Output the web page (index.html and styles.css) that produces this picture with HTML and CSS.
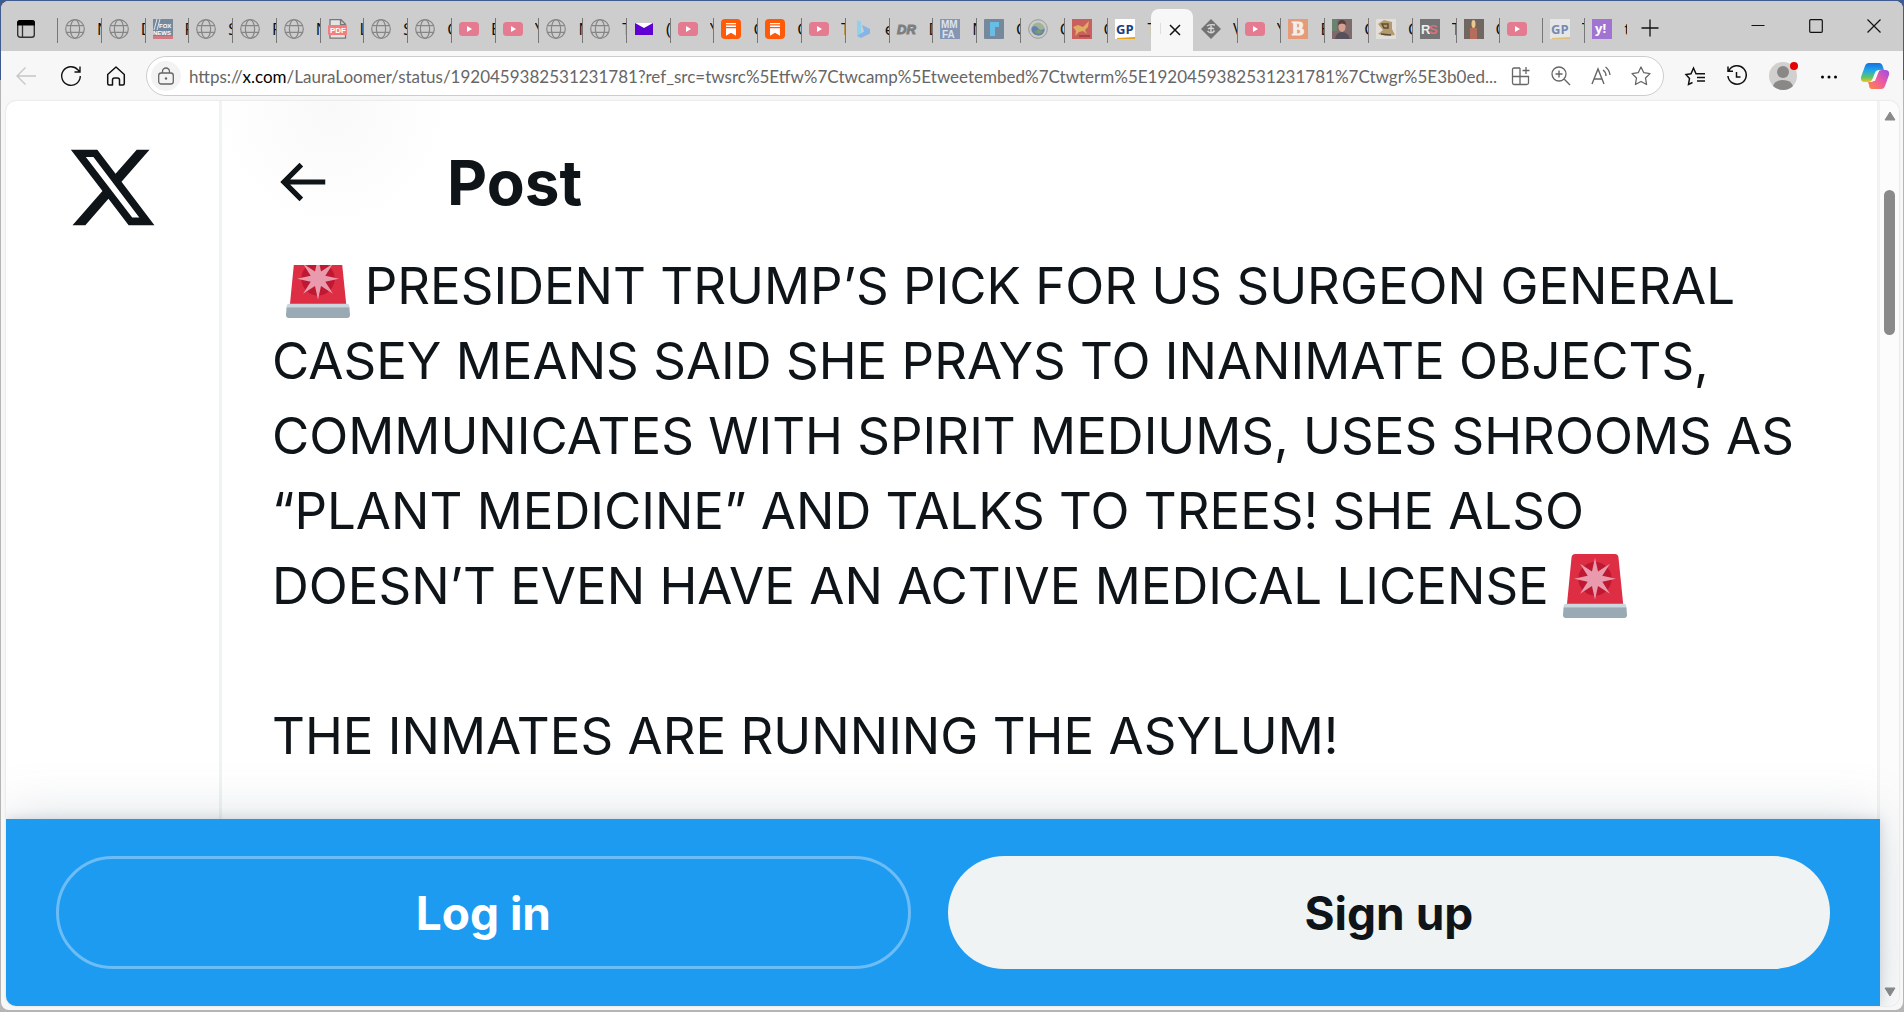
FILE: index.html
```
<!DOCTYPE html>
<html lang="en">
<head>
	<meta charset="utf-8">
	<title>Post / X</title>
	<link rel="stylesheet" href="styles.css">
</head>
<body>
	<!-- shared icons -->
	<svg class="sprite" aria-hidden="true">
		<symbol id="globe" viewBox="0 0 20 20">
			<g fill="none" stroke="#868686" stroke-width="1.2">
				<circle cx="10" cy="10" r="9.3"/>
				<ellipse cx="10" cy="10" rx="4.6" ry="9.3"/>
				<path d="M1.6 6.6h16.8M1.6 13.4h16.8"/>
			</g>
		</symbol>
		<symbol id="youtube" viewBox="0 0 20 20">
			<rect y="3" width="20" height="14" rx="3.5" fill="#e57b91"/>
			<path d="M8 7l5 3-5 3z" fill="#fff"/>
		</symbol>
		<symbol id="substack" viewBox="0 0 20 20">
			<rect width="20" height="20" rx="4" fill="#ff5a08"/>
			<path d="M5 4h10v1.3H5zM5 6.6h10v1.3H5zM5 9.2h10v7.6l-5-3-5 3z" fill="#fff"/>
		</symbol>
		<symbol id="siren" viewBox="0 0 36 36">
			<path d="M2.2 28.5L4.8 2C4.9.8 5.6 0 6.8 0h22.4c1.200 0 1.900.8 2 2l2.700 26.500z" fill="#dd2e44"/>
			<circle cx="18" cy="13.900" r="9.400" fill="#be1931"/>
			<path d="M18 2.100L19.700 9.800 26.400 5.500 22.100 12.200 29.800 13.900 22.100 15.600 26.400 22.300 19.700 18 18 25.700 16.300 18 9.600 22.300 13.900 15.600 6.200 13.900 13.900 12.200 9.600 5.500 16.300 9.800z" fill="#ea9aad"/>
			<path d="M.3 30l.2-1c.1-.6.5-1 1.100-1h32.800c.6 0 1 .4 1.100 1l.2 1z" fill="#ccd6dd"/>
			<path d="M.3 29.900h35.400l.3 4.600c0 .9-.6 1.500-1.500 1.500h-33C.6 36 0 35.400 0 34.500z" fill="#99aab5"/>
		</symbol>
	</svg>

	<div class="window">
		<div class="tab-strip">
			<button class="tab-actions" aria-label="Tab actions">
				<svg viewBox="0 0 18 18"><rect x=".7" y=".7" width="16.600" height="16.600" rx="2.500" fill="none" stroke="#333" stroke-width="1.400"/><path d="M0 5.500V3a3 3 0 013-3h12a3 3 0 013 3v2.500z"/><path d="M5.500 5v12" stroke="#333" stroke-width="1.300"/></svg>
			</button>
			<div class="tabs">
				<button class="tab"><svg><use href="#globe"/></svg><span>N</span></button>
				<button class="tab"><svg><use href="#globe"/></svg><span>D</span></button>
				<button class="tab"><svg viewBox="0 0 20 20"><rect width="20" height="20" fill="#74899f"/><path d="M0 17h20v3H0z" fill="#d27a84"/><path d="M1 11L4 0M4 11L7 0" stroke="#dfe5ea"/><text x="6" y="8.500" class="fav-sm" fill="#fff">FOX</text><text x="0" y="15.500" class="fav-sm" fill="#fff">NEWS</text></svg><span>F</span></button>
				<button class="tab"><svg><use href="#globe"/></svg><span>S</span></button>
				<button class="tab"><svg><use href="#globe"/></svg><span>R</span></button>
				<button class="tab"><svg><use href="#globe"/></svg><span>N</span></button>
				<button class="tab"><svg viewBox="0 0 20 20"><path d="M2 .7h11l4.500 4.500v14H2zM12.500.7v5h5" fill="#e4e4e4" stroke="#777" stroke-width="1.300"/><rect y="6" width="19" height="10" rx="1" fill="#f08080"/><text x="2" y="14" class="fav-pdf" fill="#fff">PDF</text></svg><span>L</span></button>
				<button class="tab"><svg><use href="#globe"/></svg><span>S</span></button>
				<button class="tab"><svg><use href="#globe"/></svg><span>C</span></button>
				<button class="tab"><svg><use href="#youtube"/></svg><span>E</span></button>
				<button class="tab"><svg><use href="#youtube"/></svg><span>Y</span></button>
				<button class="tab"><svg><use href="#globe"/></svg><span>N</span></button>
				<button class="tab"><svg><use href="#globe"/></svg><span>T</span></button>
				<button class="tab"><svg viewBox="0 0 20 20"><path d="M1 4h18v12H1z" fill="#5f01d1"/><path d="M1 4h18l-9 5z" fill="#fff"/></svg><span>(</span></button>
				<button class="tab"><svg><use href="#youtube"/></svg><span>Y</span></button>
				<button class="tab"><svg><use href="#substack"/></svg><span>C</span></button>
				<button class="tab"><svg><use href="#substack"/></svg><span>C</span></button>
				<button class="tab"><svg><use href="#youtube"/></svg><span>T</span></button>
				<button class="tab"><svg viewBox="0 0 20 20"><path d="M4 1l4 1.500v12L4 17z" fill="#8fd0ec"/><path d="M9 6l8 4v4.500L8 19l-4-2 7-4.500z" fill="#86b4e4"/></svg><span>e</span></button>
				<button class="tab"><svg viewBox="0 0 20 20"><text x="0" y="15" class="fav-dr" fill="#7e7e7e" stroke="#7e7e7e">DR</text></svg><span>D</span></button>
				<button class="tab"><svg viewBox="0 0 20 20"><rect width="20" height="20" fill="#8596b3"/><text x="1" y="9" class="fav-mm" fill="#dde3ec">MM</text><text x="2" y="18.500" class="fav-mm" fill="#dde3ec">FA</text></svg><span>N</span></button>
				<button class="tab"><svg viewBox="0 0 20 20"><rect width="20" height="20" rx="1" fill="#75889c"/><path d="M6 17V3h9v5h-4v9z" fill="#66bde6"/></svg><span>C</span></button>
				<button class="tab"><svg viewBox="0 0 20 20"><circle cx="10" cy="10" r="9.300" fill="#c9cdc6" stroke="#999"/><circle cx="10" cy="10" r="6.500" fill="#9fb29a"/><path d="M3.500 9q3-4 6.500 0t6.500 0v3q-2 5-6.500 4.500T3.500 12z" fill="#6681ad"/><path d="M6 13l5-3 4 3-4 2z" fill="#7c9c6c"/></svg><span>C</span></button>
				<button class="tab"><svg viewBox="0 0 20 20"><rect width="20" height="20" fill="#c9605e"/><path d="M1 8l5-2 5 2 6-6-1 6-3 3 2 4-4-3-4 1-4 4 1-5z" fill="#dfad63"/><path d="M7 17h11" stroke="#a64444" stroke-width="2"/></svg><span>C</span></button>
				<button class="tab"><svg viewBox="0 0 20 20"><rect width="20" height="20" fill="#fff"/><text x="1" y="14.500" class="fav-gp" fill="#1b3d7f">GP</text><path d="M2 19l18-1v2H2z" fill="#e5a21c"/></svg><span>T</span></button>
				<div class="tab tab-active">
					<button aria-label="Close tab"><svg viewBox="0 0 12 12"><path d="M1 1l10 10M11 1L1 11" stroke="#111" stroke-width="1.500"/></svg></button>
				</div>
				<button class="tab"><svg viewBox="0 0 20 20"><path d="M10 0l10 10-10 10L0 10z" fill="#737373"/><path d="M6 7q3-2 8-1M7 10q3-2 6 0M10 6v8M6.500 12q4 4 7-.5" fill="none" stroke="#d5d5d5" stroke-width="1.400"/></svg><span>V</span></button>
				<button class="tab"><svg><use href="#youtube"/></svg><span>Y</span></button>
				<button class="tab"><svg viewBox="0 0 20 20"><rect width="20" height="20" fill="#e69b78"/><text x="4" y="16" class="fav-b" fill="#f3eeea" stroke="#f3eeea">B</text></svg><span>E</span></button>
				<button class="tab"><svg viewBox="0 0 20 20"><rect width="20" height="20" fill="#7d6b6b"/><path d="M0 0h5v12H0z" fill="#6c8170"/><path d="M3 20q1-7 7-7t8 7z" fill="#55505c"/><ellipse cx="10" cy="8" rx="3.500" ry="5" fill="#d5a08e"/><path d="M6 6q0-5 4-5t4 5q-4-3-8 0z" fill="#54413f"/></svg><span>C</span></button>
				<button class="tab"><svg viewBox="0 0 20 20"><rect width="20" height="20" fill="#e2dfda"/><path d="M2 5l6-4 8 2v7l3 6-9 1-8-2 5-4z" fill="#b79a6c"/><path d="M6 5h6v4H8zM5 15l10 1" stroke="#594d3d" stroke-width="1.500" fill="none"/></svg><span>C</span></button>
				<button class="tab"><svg viewBox="0 0 20 20"><rect width="20" height="20" fill="#747474"/><text x="1" y="15" class="fav-rs" fill="#eee">R</text><text x="9" y="15" class="fav-rs" fill="#df6f7c">S</text></svg><span>T</span></button>
				<button class="tab"><svg viewBox="0 0 20 20"><rect width="20" height="20" fill="#706760"/><path d="M6 9h7v11H6z" fill="#b56d5e"/><ellipse cx="9.500" cy="5" rx="2" ry="4" fill="#ecc88c"/></svg><span>C</span></button>
				<button class="tab tab-short"><svg><use href="#youtube"/></svg><span></span></button>
				<button class="tab tab-short"><svg viewBox="0 0 20 20"><rect width="20" height="20" fill="#e6e6e6"/><text x="1" y="14.500" class="fav-gp" fill="#748bb3">GP</text><path d="M2 19l18-1v2H2z" fill="#dfc07c"/></svg><span>T</span></button>
				<button class="tab tab-short"><svg viewBox="0 0 20 20"><rect width="20" height="20" fill="#a274d1"/><text x="3" y="14" class="fav-gp" fill="#fff">y!</text></svg><span>t</span></button>
			</div>
			<button class="new-tab" aria-label="New tab"><svg viewBox="0 0 18 18"><path d="M9 .5v17M.5 9h17" stroke="#111" stroke-width="1.300"/></svg></button>
			<div class="window-controls">
				<button aria-label="Minimize"><svg viewBox="0 0 14 14"><path d="M.5 6.500h13" stroke="#111"/></svg></button>
				<button aria-label="Maximize"><svg viewBox="0 0 14 14"><rect x=".7" y=".7" width="12.600" height="12.600" rx="1" fill="none" stroke="#111" stroke-width="1.200"/></svg></button>
				<button aria-label="Close"><svg viewBox="0 0 14 14"><path d="M.5.5l13 13M13.500.5l-13 13" stroke="#111" stroke-width="1.200"/></svg></button>
			</div>
		</div>

		<div class="toolbar">
			<div class="nav">
				<button aria-label="Back" disabled><svg viewBox="0 0 20 20"><path d="M20 10H1M9.500 1.500L1 10l8.500 8.500" fill="none" stroke="#c6c6c6" stroke-width="1.300"/></svg></button>
				<button aria-label="Refresh"><svg viewBox="0 0 20 20"><path d="M19.300 10A9.300 9.300 0 1 1 16.800 3.700L19 6M19 .5V6h-5.500" fill="none" stroke="#111" stroke-width="1.400"/></svg></button>
				<button aria-label="Home"><svg viewBox="0 0 20 20"><path d="M1.700 8.500L10 1l8.300 7.500v9q0 1.500-1.500 1.500h-3.300v-5q0-2-2-2h-3q-2 0-2 2v5H3.200q-1.500 0-1.500-1.500z" fill="none" stroke="#111" stroke-width="1.500" stroke-linejoin="round"/></svg></button>
			</div>
			<div class="address">
				<span class="lock"><svg viewBox="0 0 18 18"><rect x="1.700" y="6" width="14.600" height="11" rx="2.500" fill="none" stroke="#666" stroke-width="1.300"/><path d="M5.500 6V4.500a3.500 3.500 0 017 0V6" fill="none" stroke="#666" stroke-width="1.300"/><circle cx="9" cy="11.500" r="1.200" fill="#666"/></svg></span>
				<a class="url" href="#">https://<b>x.com</b>/LauraLoomer/status/1920459382531231781?ref_src=twsrc%5Etfw%7Ctwcamp%5Etweetembed%7Ctwterm%5E1920459382531231781%7Ctwgr%5E3b0ed...</a>
				<div class="address-icons">
					<button aria-label="App available"><svg viewBox="0 0 20 20"><path d="M9 2H3Q1.500 2 1.500 3.500v13Q1.500 18.500 3 18.500h12.500q2 0 2-1.500v-6.500h-16M9 2v16.500M15 1v7M11.500 4.500h7" fill="none" stroke="#666" stroke-width="1.300"/></svg></button>
					<button aria-label="Zoom"><svg viewBox="0 0 20 20"><path d="M13.300 13.300L19 19M8 4.500v7M4.500 8h7" stroke="#666" stroke-width="1.400"/><circle cx="8" cy="8" r="7" fill="none" stroke="#666" stroke-width="1.300"/></svg></button>
					<button aria-label="Read aloud"><svg viewBox="0 0 20 20"><path d="M1 18L7 3l6 15M3 13h8M12 4q3 2 3 6M14.500 1q4 3 4.500 8" fill="none" stroke="#666" stroke-width="1.400"/></svg></button>
					<button aria-label="Favorite"><svg viewBox="0 0 20 20"><path d="M10 1l2.800 5.700 6.200.9-4.500 4.400 1.100 6.500L10 15.500l-5.600 3 1.100-6.500L1 7.600l6.200-.9z" fill="none" stroke="#666" stroke-width="1.300" stroke-linejoin="round"/></svg></button>
				</div>
			</div>
			<div class="tools">
				<button aria-label="Favorites"><svg viewBox="0 0 20 20"><path d="M14 7.700h-3L8.500 2 6 7.700l-5 .8 3.500 4-1 6L7.500 16.500M12 11.500h8M12 15h8M13.500 7.700H20" fill="none" stroke="#111" stroke-width="1.500"/></svg></button>
				<button aria-label="History"><svg viewBox="0 0 20 20"><path d="M2 4.500A9.200 9.200 0 1 1 .9 10M1 .5v4.800h5M9.500 6v5h4" fill="none" stroke="#111" stroke-width="1.500"/></svg></button>
				<button class="profile" aria-label="Profile"><svg viewBox="0 0 28 28"><circle cx="14" cy="14" r="14" fill="#d2d0ce"/><circle cx="14" cy="10" r="6" fill="#8a8886"/><path d="M4 24q2-6 10-6t10 6q-4 4-10 4T4 24z" fill="#8a8886"/><circle cx="25" cy="4" r="4" fill="#e60000"/></svg></button>
				<button aria-label="Settings and more"><svg viewBox="0 0 20 20"><circle cx="3.500" cy="11" r="1.500"/><circle cx="10" cy="11" r="1.500"/><circle cx="16.500" cy="11" r="1.500"/></svg></button>
				<button class="copilot" aria-label="Copilot">
					<svg viewBox="0 0 28 28">
						<defs>
							<linearGradient id="cool" x1="0" y1="0" x2="0" y2="1"><stop offset="0" stop-color="#1a6fe0"/><stop offset=".4" stop-color="#22a7e8"/><stop offset=".75" stop-color="#5fc56b"/><stop offset="1" stop-color="#f0c814"/></linearGradient>
							<linearGradient id="warm" x1="1" y1="0" x2="0" y2="1"><stop offset="0" stop-color="#9a4de8"/><stop offset=".5" stop-color="#ee5ba0"/><stop offset="1" stop-color="#ff8a3c"/></linearGradient>
						</defs>
						<path d="M8 1h10q3 0 4 4l1 3h-5q-3 0-4 3l-3 7q-1 2-4 2H4q-5 0-4-5L4 4q1-3 4-3z" fill="url(#cool)"/>
						<path d="M20 27H11q-3 0-3-4l-1-3h3q3 0 4-3l3-7q1-2 4-2h3q5 0 4 5l-4 11q-1 3-4 3z" fill="url(#warm)"/>
						<path d="M15 9h3l-4 10h-3z" fill="#f7f7f7"/>
					</svg>
				</button>
			</div>
		</div>

		<div class="viewport">
			<div class="page">
				<div class="content">
					<header class="side">
						<a href="#" aria-label="X"><svg viewBox="0 0 24 24"><path fill="#0f1419" d="M18.244 2.250h3.308l-7.227 8.260 8.502 11.240H16.170l-5.214-6.817L4.990 21.750H1.680l7.730-8.835L1.254 2.250H8.080l4.713 6.231zm-1.161 17.520h1.833L7.084 4.126H5.117z"/></svg></a>
					</header>
					<main class="column">
						<div class="column-header">
							<button class="back" aria-label="Back"><svg viewBox="0 0 24 24"><path fill="#0f1419" d="M7.414 13l5.043 5.040-1.414 1.420L3.586 12l7.457-7.460 1.414 1.420L7.414 11H21v2H7.414z"/></svg></button>
							<h2>Post</h2>
						</div>
						<article class="post">
							<p>&nbsp;<svg class="emoji"><use href="#siren"/></svg> PRESIDENT TRUMP’S PICK FOR US SURGEON GENERAL<br>
							CASEY MEANS SAID SHE PRAYS TO INANIMATE OBJECTS,<br>
							COMMUNICATES WITH SPIRIT MEDIUMS, USES SHROOMS AS<br>
							“PLANT MEDICINE” AND TALKS TO TREES! SHE ALSO<br>
							DOESN’T EVEN HAVE AN ACTIVE MEDICAL LICENSE <svg class="emoji"><use href="#siren"/></svg></p>
							<p>THE INMATES ARE RUNNING THE ASYLUM!</p>
						</article>
					</main>
				</div>
				<div class="login-bar">
					<button class="login">Log in</button>
					<button class="signup">Sign up</button>
				</div>
			</div>
			<div class="scrollbar">
				<svg viewBox="0 0 12 10"><path d="M6 1l5 8H1z" fill="#8a8a8a" stroke="#8a8a8a" stroke-linejoin="round"/></svg>
				<div class="thumb"></div>
				<svg viewBox="0 0 12 10"><path d="M6 9l5-8H1z" fill="#8a8a8a" stroke="#8a8a8a" stroke-linejoin="round"/></svg>
			</div>
		</div>
	</div>
</body>
</html>
```
FILE: styles.css
```
* {
	box-sizing: border-box;
}

body {
	display: flex;
	flex-direction: column;
	height: 100vh;
	margin: 0;
	padding: 1px 1px 2px;
	overflow: hidden;
	color: #0f1419;
	font-family: 'Noto Sans', sans-serif;
	background: linear-gradient(#3f5a8f 80px, #b5b5b5 80px);
}

button {
	display: flex;
	align-items: center;
	justify-content: center;
	padding: 0;
	border: 0;
	color: inherit;
	font: inherit;
	background: none;
}

svg {
	display: block;
	overflow: visible;
}

.sprite {
	position: absolute;
	width: 0;
	height: 0;
}

.window {
	flex: 1;
	display: flex;
	flex-direction: column;
	min-height: 0;
	border-radius: 8px;
	background: #f7f7f7;
	overflow: hidden;
}

/* tabs */
.tab-strip {
	display: flex;
	height: 50px;
	background: #cdcdcd;
}

.tab-actions {
	flex: none;
	width: 56px;
	height: 56px;
	padding-right: 6px;
}

.tab-actions svg, .new-tab svg {
	width: 18px;
	height: 18px;
}

.tabs {
	flex: 1;
	display: flex;
	min-width: 0;
}

.tab {
	position: relative;
	flex: 30 1 0;
	justify-content: flex-start;
	gap: 12px;
	width: 0;
	min-width: 0;
	height: 56px;
	padding-left: 8px;
	font-size: 16px;
}

.tab-short {
	flex-grow: 29;
}

.tab::before {
	content: "";
	position: absolute;
	left: 0;
	top: 17px;
	width: 1px;
	height: 25px;
	background: #777;
}

.tab svg {
	flex: none;
	width: 20px;
	height: 20px;
}

.tab span {
	flex: 1 1 0;
	min-width: 0;
	overflow: hidden;
	text-align: left;
	color: #111;
}

.tab-active {
	height: 42px;
	margin-top: 8px;
	padding: 0 0 0 6px;
	border-radius: 8px 8px 0 0;
	background: #f7f7f7;
}

.tab-active::before {
	left: 9px;
	top: 14px;
	height: 11px;
	background: #ddd;
}

/* the tab after the active one has no divider */
.tab-active + .tab::before {
	display: none;
}

.tab-active button {
	width: 100%;
	height: 42px;
}

.tab-active svg {
	width: 12px;
	height: 12px;
}

.new-tab {
	flex: none;
	width: 46px;
	height: 54px;
}

.window-controls {
	flex: none;
	display: flex;
	padding-left: 56px;
}

.window-controls button {
	width: 58px;
	height: 50px;
}

.window-controls svg {
	width: 14px;
	height: 14px;
}

.fav-sm {
	font: bold 6px 'Liberation Sans', sans-serif;
}

.fav-pdf {
	font: bold 8px 'Liberation Sans', sans-serif;
}

.fav-dr {
	font: italic bold 13px 'Liberation Sans', sans-serif;
}

.fav-mm {
	font: bold 10px 'Liberation Sans', sans-serif;
}

.fav-gp {
	font: bold 13px 'Open Sans', sans-serif;
}

.fav-b {
	font: bold 18px 'Liberation Serif', serif;
}

.fav-rs {
	font: bold 13px 'Liberation Sans', sans-serif;
}

/* toolbar */
.toolbar {
	display: flex;
	align-items: center;
	height: 50px;
	padding: 0 14px 0 15px;
}

.nav {
	display: flex;
	gap: 25px;
	width: 130px;
}

.toolbar svg {
	width: 20px;
	height: 20px;
}

.address {
	flex: 1;
	display: flex;
	align-items: center;
	min-width: 0;
	height: 40px;
	padding: 0 12px 0 4px;
	border: 1px solid #ccc;
	border-radius: 20px;
	background: #fff;
}

.lock {
	display: flex;
	align-items: center;
	justify-content: center;
	width: 30px;
	height: 30px;
	border-radius: 50%;
	background: #f3f3f3;
}

.address .lock svg {
	width: 18px;
	height: 18px;
}

.url {
	flex: 1;
	min-width: 0;
	padding-left: 8px;
	overflow: hidden;
	color: #666;
	font-family: Lato, sans-serif;
	font-size: 17px;
	white-space: nowrap;
	text-decoration: none;
}

.url b {
	color: #000;
	font-weight: normal;
}

.address-icons {
	display: flex;
	gap: 20px;
}

.tools {
	display: flex;
	align-items: center;
	gap: 22px;
	padding-left: 21px;
}

.toolbar .profile svg, .toolbar .copilot svg {
	width: 28px;
	height: 28px;
}

/* page */
.viewport {
	flex: 1;
	display: flex;
	min-height: 0;
	margin: 0 4px 4px 5px;
	border-radius: 10px;
	background: #fff;
	box-shadow: 0 0 2px #ccc;
	overflow: hidden;
}

.page {
	flex: 1;
	display: flex;
	flex-direction: column;
	min-width: 0;
	font-family: Inter, sans-serif;
}

.content {
	flex: 1;
	display: flex;
	min-height: 0;
	overflow: hidden;
}

.side {
	width: 213px;
	padding: 40px 60px;
}

.side svg {
	width: 93px;
	height: 93px;
}

.column {
	position: relative;
	flex: 1;
	min-width: 0;
	border: solid #eff3f4;
	border-width: 0 3px;
}

.column-header {
	position: absolute;
	top: 0;
	left: 0;
	right: 0;
	display: flex;
	align-items: center;
	gap: 114px;
	height: 164px;
	padding: 0 0 2px 49px;
	background: radial-gradient(circle at 110px 10px, #f9f9f9, #fff 120px);
}

.back svg {
	width: 62px;
	height: 62px;
}

h2 {
	margin: 0;
	font-size: 62px;
	line-height: 75px;
}

.post {
	padding: 147px 50px 0;
	font-size: 51px;
	line-height: 75px;
	white-space: nowrap;
}

.post p {
	margin: 0 0 75px;
}

.emoji {
	display: inline-block;
	width: 64px;
	height: 64px;
	vertical-align: -14px;
}

.login-bar {
	position: relative;
	display: flex;
	gap: 37px;
	padding: 37px 50px;
	font-size: 46px;
	font-weight: bold;
	background: #1d9bf0;
	box-shadow: 0 0 50px rgba(101, 119, 134, .25), 0 0 10px rgba(101, 119, 134, .25);
}

.login-bar button {
	flex: 1 1 auto;
	height: 113px;
	border-radius: 57px;
}

.login-bar .login {
	border: 3px solid #6cbcf5;
	color: #fff;
}

.login-bar .signup {
	background: #eff3f4;
}

.scrollbar {
	display: flex;
	flex-direction: column;
	align-items: center;
	width: 19px;
	padding: 10px 0 9px;
	background: #fcfcfc;
}

.scrollbar svg {
	width: 12px;
	height: 10px;
}

.thumb {
	width: 11px;
	height: 145px;
	margin: 69px 0 auto;
	border-radius: 6px;
	background: #8a8a8a;
}
```
